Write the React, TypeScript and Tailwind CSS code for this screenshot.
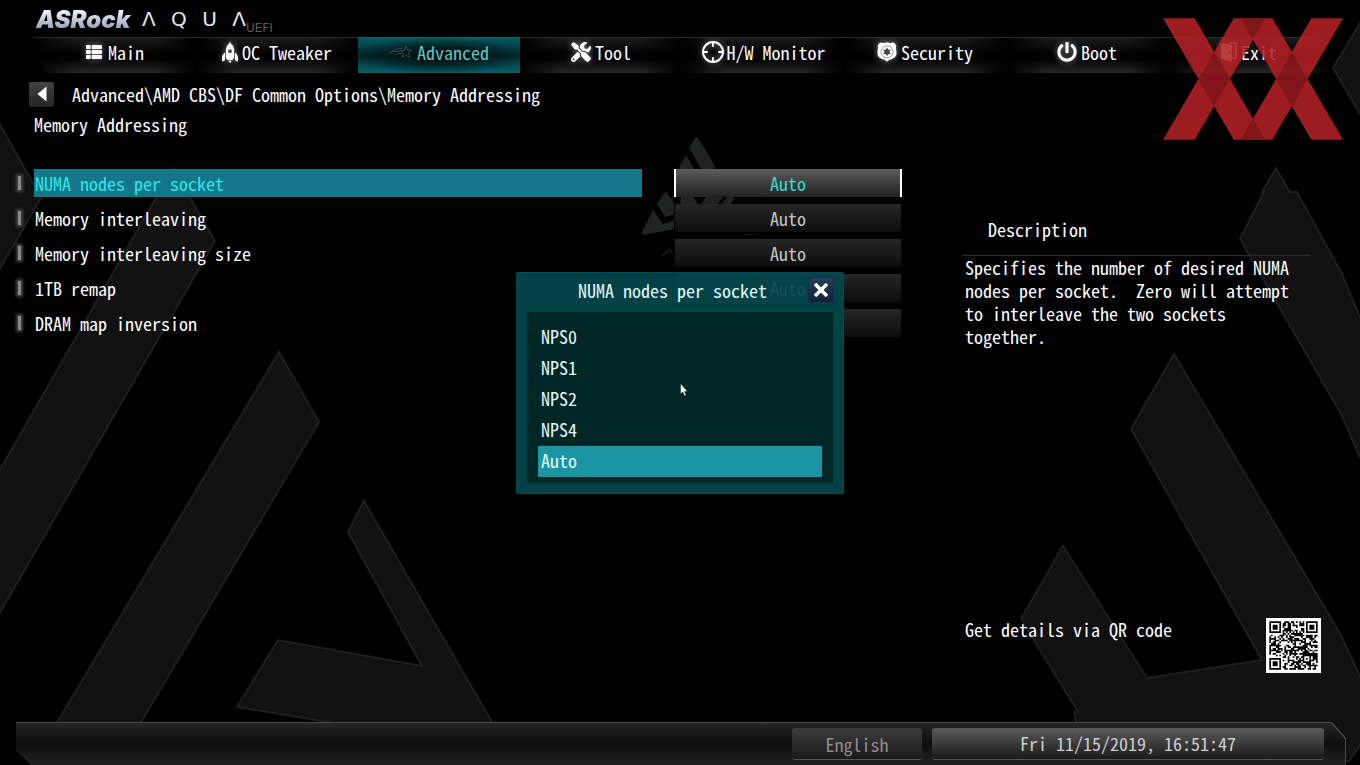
import React, { useState } from "react";
import { FaPowerOff, FaThList, FaTools } from "react-icons/fa";
import { Crosshair } from "lucide-react";

const OPTIONS = ["NPS0", "NPS1", "NPS2", "NPS4", "Auto"];

const SETTINGS = [
  "NUMA nodes per socket",
  "Memory interleaving",
  "Memory interleaving size",
  "1TB remap",
  "DRAM map inversion",
];

function RocketIcon() {
  return (
    <svg viewBox="0 0 16 22" className="w-4 h-[22px]" fill="currentColor">
      <path
        fillRule="evenodd"
        d="M8 0c.5 1.500.6 2 .8 2.600C11.200 4.600 12.200 7 12.200 10v6.500L10.500 19h-5l-1.700-2.500V10c0-3 1-5.400 3.400-7.400C7.400 2 7.500 1.500 8 0zm0 8.200a2 2 0 100 4 2 2 0 000-4z"
      />
      <path d="M3 11.500v7.800L.3 20.500c-1-3.500-.3-6.500 2.700-9zM13 11.500v7.800l2.700 1.200c1-3.500.3-6.500-2.700-9zM6.200 19.800h3.600L8 22z" />
    </svg>
  );
}

function StarIcon() {
  return (
    <svg viewBox="0 0 24 16" className="w-6 h-4 text-[#3a4849]" fill="none" stroke="currentColor">
      <path d="M17 2l1.500 4.200h4.500l-3.500 2.800 1.300 4.500-3.800-2.600-3.800 2.600 1.300-4.500-3.500-2.800h4.500z" />
      <path d="M13 4.500C8 4.500 4 6 .5 9.500 5 7 8 6.800 11 7.500M13 9.500c-3-.3-5 .3-7 2" />
    </svg>
  );
}

function ShieldIcon() {
  return (
    <svg viewBox="0 0 20 20" className="w-5 h-5">
      <path
        fill="#fff"
        d="M2 1.500C3.500.3 5 .2 6.500 1.200 8 .2 12 .2 13.500 1.200 15 .2 16.500.3 18 1.500l1.300 2.500c-1 2 .5 4.500.2 8-.3 3-3 4.500-5.500 5.200-2 .6-3 1.300-4 2.600-1-1.300-2-2-4-2.600C3.500 16.500.8 15 .5 12c-.3-3.500 1.200-6 .2-8z"
      />
      <circle cx="10" cy="9.800" r="6" fill="none" stroke="#888" strokeWidth=".8" />
      <path
        fill="#444"
        d="M10 5.300l1.200 2.400 2.700-.2-1.500 2.300 1.500 2.300-2.700-.2L10 14.300l-1.200-2.400-2.700.2 1.500-2.300-1.500-2.300 2.700.2z"
      />
    </svg>
  );
}

function DoorIcon() {
  return (
    <svg viewBox="0 0 16 20" className="w-4 h-5">
      <path d="M8 1h7v15H9" fill="none" stroke="currentColor" strokeWidth="1.500" />
      <path
        fill="currentColor"
        fillRule="evenodd"
        d="M0 1l11 2v17L0 16.500zM8.600 9.500a1 1.300 0 100 2.600 1 1.300 0 000-2.600z"
      />
    </svg>
  );
}

const TABS = [
  { label: "Main", icon: <FaThList className="w-4 h-4 mr-0.5" /> },
  { label: "OC Tweaker", icon: <RocketIcon /> },
  { label: "Advanced", icon: <StarIcon /> },
  { label: "Tool", icon: <FaTools className="w-5 h-5" /> },
  { label: "H/W Monitor", icon: <Crosshair className="w-6 h-6 -mr-0.5" /> },
  { label: "Security", icon: <ShieldIcon /> },
  { label: "Boot", icon: <FaPowerOff className="w-5 h-5" /> },
  { label: "Exit", icon: <DoorIcon /> },
];

// dark "A" shapes and the small emblem behind the page
function Backdrop() {
  return (
    <svg
      aria-hidden="true"
      viewBox="0 0 1360 765"
      preserveAspectRatio="none"
      className="absolute inset-0 w-full h-full"
    >
      <g fill="#111" stroke="#1e1e1e" strokeWidth="2">
        <path d="M-3 119L41 198-3 274z" />
        <path d="M173 168l42 73L-3 618V475z" />
        <path d="M279 352l40 70-182 307H53z" />
        <path d="M364 501l132 228H370l-133-22 41-67 144 26-74-134z" />
        <path d="M1363 18l-30 50 30 51z" />
        <path d="M1276 168l14 24h7l44 80 22 52v140l-22-50-101-175 24-47h-2z" />
        <path d="M1063 546l84 132 115-18-131-231 43-75 167 281 22 48v58l-14 20H1084l-10-49h4l-57-93z" />
      </g>
      <g fill="#212323">
        <path d="M697 137q2 2 3 4l15 25q0 4-6 4h-7l-13-22 6-10q1-2 2-1z" />
        <path d="M686 155l9 15h-16l1-5z" />
        <path d="M706 196h18l-8 9h-15zM728 196q7 0 6 4l-4 5h-10zM681 196h12l5 9h-18z" />
        <path d="M666 191l10 15v8l-11 3-8-13zM653 210l10 14 12-4v9l-32 6q-2-1-1-3z" />
        <path d="M742 234h15l-8 1z" />
      </g>
      <path d="M662 256l7-7 6 6" fill="none" stroke="#2a2a2a" />
    </svg>
  );
}

function SiteMark() {
  return (
    <svg
      aria-hidden="true"
      viewBox="0 0 540 365"
      className="absolute right-[17px] top-[18px] w-[180px] h-[122px] pointer-events-none"
    >
      <g opacity=".88">
        <path
          fill="#b22025"
          d="M0 0h95l212 365h-95zM233 0h95l212 365h-95zM212 0h95L95 365H0zM445 0h95L328 365h-95z"
        />
        <path
          fill="#93191d"
          d="M153.500 101l47.500 81.500-47.500 81.500L106 182.500zM386.500 101l47.500 81.500-47.500 81.500L339 182.500zM233 0h74l-37 64zM233 365h74l-37-64z"
        />
      </g>
    </svg>
  );
}

const QR_SIZE = 29;

function isDark(x: number, y: number) {
  // finder patterns
  for (const [fx, fy] of [[0, 0], [QR_SIZE - 7, 0], [0, QR_SIZE - 7]]) {
    const dist = Math.max(Math.abs(x - fx - 3), Math.abs(y - fy - 3));
    if (dist <= 4) return dist !== 2 && dist !== 4;
  }
  const align = Math.max(Math.abs(x - 22), Math.abs(y - 22));
  if (align <= 2) return align !== 1;
  if (x === 6 || y === 6) return (x + y) % 2 === 0;
  const n = Math.sin(x * 12.9898 + y * 78.233) * 43758.5453;
  return n - Math.floor(n) > 0.47;
}

function QrCode() {
  let d = "";
  for (let y = 0; y < QR_SIZE; y++) {
    for (let x = 0; x < QR_SIZE; x++) {
      if (isDark(x, y)) d += `M${x} ${y}h1v1h-1z`;
    }
  }
  return (
    <svg
      role="img"
      aria-label="QR code"
      viewBox="-2 -2 33 33"
      className="w-[55px] h-[55px] shrink-0 bg-white"
    >
      <path d={d} fill="#000" />
    </svg>
  );
}

function Header() {
  return (
    <header>
      <div className="flex items-start h-[37px] pl-9">
        <span className="w-[98px] mt-2 text-[24px] leading-[24px] font-black italic font-['Inter','Liberation_Sans',sans-serif] bg-linear-to-b from-white via-[#c3c8d8] to-[#8591b3] bg-clip-text text-transparent">
          ASRock
        </span>
        <span className="flex justify-between w-[104px] ml-2 mt-2 text-[20px] leading-[22px] text-gray-200 font-['DejaVu_Sans',sans-serif]">
          <span>Λ</span>
          <span>Q</span>
          <span>U</span>
          <span>Λ</span>
        </span>
        <span className="mt-5 text-[12px] leading-4 text-[#5c5c5c] font-['DejaVu_Sans',sans-serif]">
          UEFI
        </span>
      </div>
      <nav className="flex h-9 ml-[34px] mr-[30px] [clip-path:polygon(0_0,calc(100%-14px)_0,100%_14px,100%_100%,14px_100%,0_22px)]">
        {TABS.map((tab) => (
          <button
            key={tab.label}
            className={`flex flex-1 items-center justify-center gap-1 pb-[7px] border-t ${
              tab.label === "Advanced"
                ? "border-[#11626a] text-[#5cc4c4] bg-[radial-gradient(ellipse_at_center,#020d0e_10%,transparent_75%),linear-gradient(#045a62,#03282b_50%,#06606a)]"
                : "border-[#2b2b2b] text-white bg-[linear-gradient(90deg,#000_0%,transparent_25%,transparent_75%,#000_100%),linear-gradient(#1b1b1b,#010101_45%,#030303_60%,#262626)]"
            }`}
          >
            <span
              className={
                tab.label === "Advanced"
                  ? ""
                  : "[filter:drop-shadow(0_0_3px_rgba(255,255,255,0.5))]"
              }
            >
              {tab.icon}
            </span>
            <span>{tab.label}</span>
          </button>
        ))}
      </nav>
    </header>
  );
}

function SettingRow({
  label,
  selected,
  onOpen,
}: {
  label: string;
  selected: boolean;
  onOpen: () => void;
}) {
  const id = label.replace(/ /g, "-");

  return (
    <li className="grid grid-cols-[18px_1fr_260px] items-center">
      <span className="w-[3px] h-3.5 ml-0.5 bg-[#888] shadow-[0_0_3px_2px_#444]" />
      <span
        id={id}
        className={`h-7 leading-7 pl-px ${selected ? "bg-[#147789] text-[#2ee6ea]" : "text-white"}`}
      >
        {label}
      </span>
      <button
        aria-labelledby={id}
        aria-haspopup="listbox"
        onClick={onOpen}
        className={`h-7 ml-8 ${
          selected
            ? "border-x-2 border-white text-[#35dcd0] bg-linear-to-b from-[#5c5c5c] to-[#222]"
            : "border-x border-black text-[#c4c4c4] bg-linear-to-b from-[#262626] to-[#0d0d0d]"
        }`}
      >
        Auto
      </button>
    </li>
  );
}

function OptionDialog({
  title,
  value,
  onSelect,
  onClose,
}: {
  title: string;
  value: string;
  onSelect: (val: string) => void;
  onClose: () => void;
}) {
  return (
    <div className="absolute inset-0 flex items-center justify-center">
      <div
        role="dialog"
        aria-label={title}
        className="w-[328px] rounded-[2px] border border-[#06494e] bg-[#02464c]/92 text-[#e4fbfb]"
      >
        <div className="flex items-center h-[39px] pl-5 pr-[9px] pb-1">
          <h2 className="flex-1 text-center">{title}</h2>
          <button
            aria-label="Close"
            onClick={onClose}
            className="flex items-center justify-center w-[26px] h-[26px] rounded-[3px] border border-[#16304a] bg-linear-to-b from-[#24405a] to-[#131f36]"
          >
            <svg viewBox="0 0 14 14" className="w-3.5 h-3.5">
              <path d="M1 1l12 12M13 1L1 13" stroke="#fff" strokeWidth="3.600" />
            </svg>
          </button>
        </div>
        <div
          role="listbox"
          aria-label={title}
          className="mx-2.5 mb-2.5 px-[11px] pt-2.5 pb-1.5 bg-[#012626]"
        >
          {OPTIONS.map((opt) => (
            <button
              key={opt}
              role="option"
              aria-selected={opt === value}
              onClick={() => onSelect(opt)}
              className={`block w-full h-[31px] pl-[3px] pb-1 text-left ${
                opt === value ? "bg-[#1a95a1]" : ""
              }`}
            >
              {opt}
            </button>
          ))}
        </div>
      </div>
      <svg
        aria-hidden="true"
        viewBox="0 0 9 14"
        className="absolute left-1/2 top-1/2 w-[9px] h-3.5 pointer-events-none"
      >
        <path
          d="M.5.500v10.500l2.300-2 1.700 4 1.700-.7-1.700-3.900h3z"
          fill="#fff"
          stroke="#021616"
          strokeWidth=".5"
        />
      </svg>
    </div>
  );
}

export default function App() {
  const [open, setOpen] = useState(true);
  const [value, setValue] = useState("Auto");

  return (
    <div className="relative flex flex-col min-h-screen overflow-hidden bg-black text-white text-[18px] leading-7 font-['Noto_Sans_Mono_CJK_JP','Liberation_Mono',monospace]">
      <Backdrop />

      <div className="relative flex flex-col flex-1">
        <Header />

        <div className="flex items-center mt-[7px] pl-[29px]">
          <button
            aria-label="Back"
            className="flex items-center justify-center w-[25px] h-[25px] rounded-[2px] bg-linear-to-b from-[#424242] to-[#242424]"
          >
            <svg viewBox="0 0 10 16" className="w-2.5 h-4">
              <path d="M9.500.500v15L.5 8z" fill="#fff" />
            </svg>
          </button>
          <span className="ml-[18px]">
            Advanced\AMD CBS\DF Common Options\Memory Addressing
          </span>
        </div>
        <h1 className="mt-0.5 pl-[34px]">Memory Addressing</h1>

        <main className="flex flex-1 pt-[31px]">
          <ul className="flex flex-col flex-1 gap-[7px] pl-4 pr-[60px]">
            {SETTINGS.map((label, i) => (
              <SettingRow
                key={label}
                label={label}
                selected={i === 0}
                onOpen={() => setOpen(true)}
              />
            ))}
          </ul>

          <aside className="flex flex-col w-[359px] mr-[39px] pt-[46px] pb-[49px]">
            <h2 className="pl-[26px]">Description</h2>
            <p className="mt-3 mr-2.5 pl-[3px] pr-4 border-t border-[#2c2c2c] leading-[23px] whitespace-pre-wrap">
              {
                "Specifies the number of desired NUMA nodes per socket.  Zero will attempt to interleave the two sockets together."
              }
            </p>
            <div className="flex justify-between mt-auto pl-[3px] leading-[23px]">
              <span>Get details via QR code</span>
              <QrCode />
            </div>
          </aside>
        </main>

        <footer className="ml-4 mr-3.5 pt-px pr-px bg-[#4a4a4a] [clip-path:polygon(0_0,calc(100%-14px)_0,100%_16px,100%_100%,16px_100%,0_28px)]">
          <div className="flex justify-end gap-2.5 h-[42px] pt-[5px] pr-[21px] bg-[linear-gradient(#262626,#0d0d0d_50%,#222)] [clip-path:polygon(0_0,calc(100%-14px)_0,100%_16px,100%_100%,16px_100%,0_28px)]">
            <button className="w-[130px] h-8 rounded-[3px] border-b border-[#555] text-[#8e8e8e] bg-linear-to-b from-[#3d3d3d] to-[#191919]">
              English
            </button>
            <time className="w-[392px] h-8 rounded-[3px] border-y border-[#555] text-center text-[#cfcfcf] bg-linear-to-b from-[#5a5a5a] to-[#1b1b1b]">
              Fri 11/15/2019, 16:51:47
            </time>
          </div>
        </footer>
      </div>

      {open && (
        <OptionDialog
          title="NUMA nodes per socket"
          value={value}
          onSelect={setValue}
          onClose={() => setOpen(false)}
        />
      )}
      <SiteMark />
    </div>
  );
}
